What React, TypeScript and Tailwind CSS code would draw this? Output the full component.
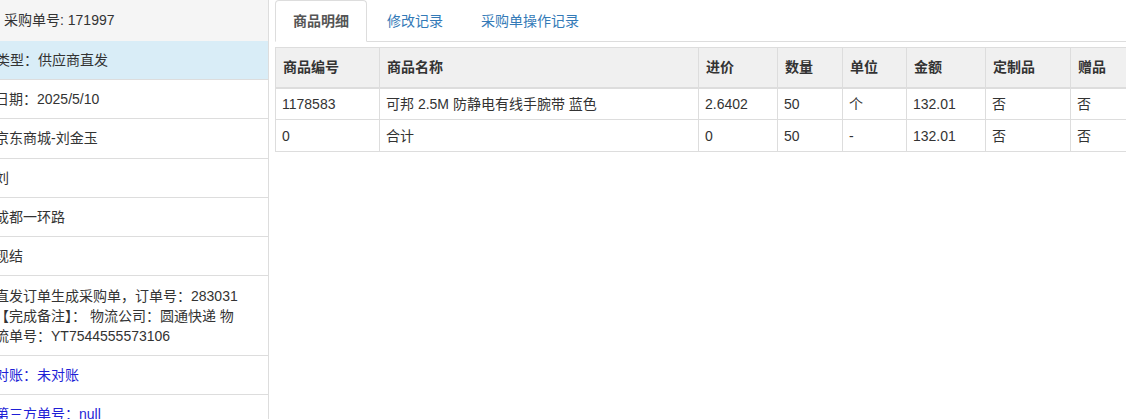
import React from 'react';

const font = { fontFamily: '"Liberation Sans", Arial, "Noto Sans CJK SC", sans-serif' };

type Info = { text: React.ReactNode; blue?: boolean };

// the list is scrolled sideways in the reference, so the first glyph of each line is cut
const infoRows: Info[] = [
  { text: '日期：2025/5/10' },
  { text: '京东商城-刘金玉' },
  { text: '刘' },
  { text: '成都一环路' },
  { text: '现结' },
  {
    text: (
      <>
        直发订单生成采购单，订单号：283031
        <br />
        【完成备注】： 物流公司：圆通快递 物
        <br />
        流单号：YT7544555573106
      </>
    ),
  },
  { text: '对账：未对账', blue: true },
  { text: '第三方单号：null', blue: true },
];

const columns = [
  { label: '商品编号', w: 'w-[104px]' },
  { label: '商品名称', w: 'w-[319px]' },
  { label: '进价', w: 'w-[79px]' },
  { label: '数量', w: 'w-[65px]' },
  { label: '单位', w: 'w-[64px]' },
  { label: '金额', w: 'w-[79px]' },
  { label: '定制品', w: 'w-[85px]' },
  { label: '赠品', w: 'w-[90px]' },
];

const rows = [
  ['1178583', '可邦 2.5M 防静电有线手腕带 蓝色', '2.6402', '50', '个', '132.01', '否', '否'],
  ['0', '合计', '0', '50', '-', '132.01', '否', '否'],
];

const tabs = ['商品明细', '修改记录', '采购单操作记录'];

export default function App() {
  return (
    <div style={font} className="flex w-[1126px] h-[419px] overflow-hidden bg-white text-[14px] text-[#333]">
      {/* left info list */}
      <div className="w-[269px] shrink-0 border-r border-[#ddd] overflow-hidden">
        <div className="h-[41px] bg-[#f5f5f5] pl-[4px] leading-[41px]">采购单号: 171997</div>
        <div className="bg-[#d9edf7] py-[9px] leading-[20px] border-b border-[#ddd]">
          <span className="block -ml-[4px] whitespace-nowrap">类型：供应商直发</span>
        </div>
        {infoRows.map((r, i) => (
          <div key={i} className="py-[9.15px] leading-[20px] border-b border-[#ddd] overflow-hidden">
            <span className={`block -ml-[5px] whitespace-nowrap ${r.blue ? 'text-[#1f1fd6]' : ''}`}>{r.text}</span>
          </div>
        ))}
      </div>

      {/* right content */}
      <div className="flex-1 min-w-0 pl-[6px] overflow-hidden">
        <div className="flex h-[42px] border-b border-[#ddd]">
          {tabs.map((t, i) => (
            <div
              key={t}
              className={`mr-[2px] px-[17px] leading-[40px] border rounded-t-[4px] ${
                i === 0
                  ? 'border-[#ddd] border-b-white bg-white font-bold text-[#555] h-[42px]'
                  : 'border-transparent text-[#337ab7]'
              }`}
            >
              {t}
            </div>
          ))}
        </div>

        <div className="mt-[5px] w-[1000px]">
          <table className="border-collapse table-fixed w-[885px] leading-[20px]">
            <thead>
              <tr className="bg-[#f0f0f0]">
                {columns.map(c => (
                  <th
                    key={c.label}
                    className={`${c.w} h-[40px] text-left font-bold px-[7px] border border-[#ddd] border-b-2`}
                  >
                    {c.label}
                  </th>
                ))}
              </tr>
            </thead>
            <tbody>
              {rows.map((r, i) => (
                <tr key={i}>
                  {r.map((v, j) => (
                    <td key={j} className="h-[32px] px-[6px] border border-[#ddd] whitespace-nowrap">
                      {v}
                    </td>
                  ))}
                </tr>
              ))}
            </tbody>
          </table>
        </div>
      </div>
    </div>
  );
}
